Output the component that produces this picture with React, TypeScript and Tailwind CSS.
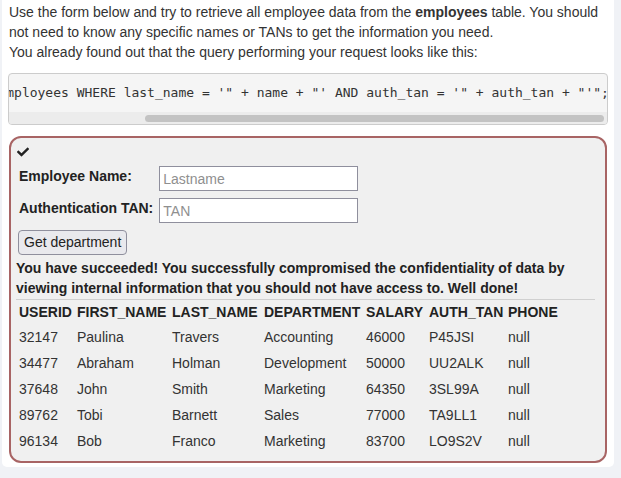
import { FaCheck } from 'react-icons/fa'

const employees = [
  { id: '32147', first: 'Paulina', last: 'Travers', dept: 'Accounting', salary: '46000', tan: 'P45JSI', phone: 'null' },
  { id: '34477', first: 'Abraham', last: 'Holman', dept: 'Development', salary: '50000', tan: 'UU2ALK', phone: 'null' },
  { id: '37648', first: 'John', last: 'Smith', dept: 'Marketing', salary: '64350', tan: '3SL99A', phone: 'null' },
  { id: '89762', first: 'Tobi', last: 'Barnett', dept: 'Sales', salary: '77000', tan: 'TA9LL1', phone: 'null' },
  { id: '96134', first: 'Bob', last: 'Franco', dept: 'Marketing', salary: '83700', tan: 'LO9S2V', phone: 'null' },
]

const query = `"SELECT * FROM employees WHERE last_name = '" + name + "' AND auth_tan = '" + auth_tan + "'";`

export default function App() {
  return (
    <div className="min-h-screen bg-[#f0f2f6] text-[#333] text-[14px] font-['Liberation_Sans',Arial,sans-serif]">
      <div className="ml-[2px] mr-[7px] bg-white rounded-b-[5px] px-[6px] pt-[2px] pb-[4px]">

        {/* Intro */}
        <div className="pl-px leading-[20px]">
          <div className="whitespace-nowrap">
            Use the form below and try to retrieve all employee data from the <b>employees</b> table. You should
          </div>
          <div className="whitespace-nowrap">not need to know any specific names or TANs to get the information you need.</div>
          <div className="whitespace-nowrap">You already found out that the query performing your request looks like this:</div>
        </div>

        {/* Query box, scrolled to the right */}
        <div className="mt-[11px] h-[52px] border border-[#ccc] rounded-[4px] bg-[#f5f5f5] overflow-hidden flex flex-col">
          <div className="pt-[10px] h-[38px] overflow-hidden">
            <pre className="ml-[-128px] font-['DejaVu_Sans_Mono',monospace] text-[13px] leading-[18px] text-[#333] whitespace-pre">
              {query}
            </pre>
          </div>
          <div className="flex-1 bg-[#ececec] flex items-center">
            <div className="ml-[136px] w-[459px] h-[7px] rounded-full bg-[#c3c3c3]" />
          </div>
        </div>

        {/* Lesson form */}
        <div className="mt-[11px] mx-px border-2 border-[#a86464] rounded-[12px] bg-[#f0f0f0] pt-[7px] pb-[7px]">
          <div className="pl-[6px] h-[14px] flex items-center text-[#222]">
            <FaCheck size={12} />
          </div>

          <div className="pl-[8px] mt-[7px] grid grid-cols-[auto_auto] justify-start gap-x-[6px] gap-y-[7px] items-start">
            <label className="font-bold leading-[20px] text-[#222]">Employee Name:</label>
            <input
              className="w-[199px] h-[25px] bg-white border border-[#8f8f9d] px-[3px] text-[14px] placeholder:text-[#8f8f8f] outline-none"
              placeholder="Lastname"
            />
            <label className="font-bold leading-[20px] text-[#222]">Authentication TAN:</label>
            <input
              className="w-[199px] h-[25px] bg-white border border-[#8f8f9d] px-[3px] text-[14px] placeholder:text-[#8f8f8f] outline-none"
              placeholder="TAN"
            />
          </div>

          <div className="pl-[7px] mt-[7px]">
            <button className="h-[25px] px-[5px] bg-[#e9e9ed] border border-[#8f8f9d] rounded-[4px] text-[14px] text-[#222]">
              Get department
            </button>
          </div>

          <div className="px-[5px] mt-[3px]">
            <p className="font-bold leading-[20px] text-[#222]">
              You have succeeded! You successfully compromised the confidentiality of data by<br />
              viewing internal information that you should not have access to. Well done!
            </p>
            <div className="mt-px mr-[5px] h-px bg-[#d0d0d0]" />

            <table className="ml-px border-collapse text-left">
              <thead>
                <tr className="h-[24px]">
                  <th className="w-[58px] px-[2px] font-bold text-[#222]">USERID</th>
                  <th className="w-[95px] px-[2px] font-bold text-[#222]">FIRST_NAME</th>
                  <th className="w-[92px] px-[2px] font-bold text-[#222]">LAST_NAME</th>
                  <th className="w-[102px] px-[2px] font-bold text-[#222]">DEPARTMENT</th>
                  <th className="w-[63px] px-[2px] font-bold text-[#222]">SALARY</th>
                  <th className="w-[79px] px-[2px] font-bold text-[#222]">AUTH_TAN</th>
                  <th className="px-[2px] font-bold text-[#222]">PHONE</th>
                </tr>
              </thead>
              <tbody>
                {employees.map((e) => (
                  <tr key={e.id} className="h-[26px]">
                    <td className="px-[2px]">{e.id}</td>
                    <td className="px-[2px]">{e.first}</td>
                    <td className="px-[2px]">{e.last}</td>
                    <td className="px-[2px]">{e.dept}</td>
                    <td className="px-[2px]">{e.salary}</td>
                    <td className="px-[2px]">{e.tan}</td>
                    <td className="px-[2px]">{e.phone}</td>
                  </tr>
                ))}
              </tbody>
            </table>
          </div>
        </div>
      </div>
    </div>
  )
}
